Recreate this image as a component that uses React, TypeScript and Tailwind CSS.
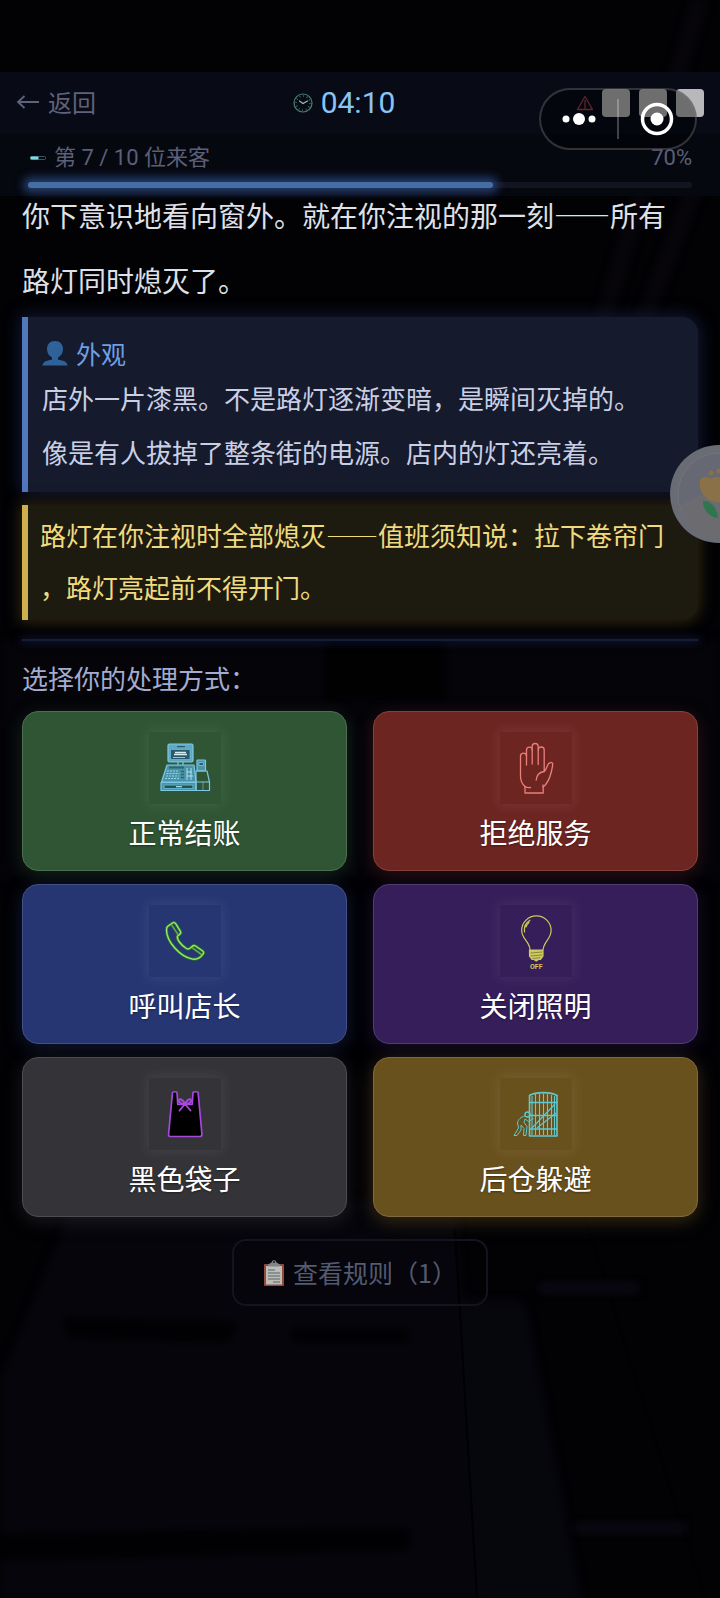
import React, { useState } from 'react';

type Action = {
  id: string;
  label: string;
  className: string;
  icon: React.ReactNode;
};

const RegisterIcon = () => (
  <svg viewBox="0 0 72 72" className="h-full w-full" fill="none" stroke="#7cc8e6" strokeWidth="1.2" strokeLinejoin="round" aria-hidden="true">
    <rect x="19" y="12" width="25" height="18" rx="1.5" fill="#5fa9c4" />
    <rect x="21.5" y="17.5" width="19.5" height="10" fill="#2b5a6a" strokeWidth="0.6" />
    <path d="M28 14.6h8" stroke="#2b5a6a" />
    <path d="M26 20.5h11M25 22.5h13" stroke="#d5edf5" strokeWidth="1.6" />
    <path d="M24 25.5h12M29 30v3M34 30v3" />
    <path d="M18 33h27l2 17H12.500z" fill="#4b93a6" />
    <path d="M20 35.500h15" stroke="#2d6470" strokeWidth="2" />
    <path d="M18 39h12M17.500 41.500h13M17 44h13M16 46.500h14" stroke="#8fd6ee" strokeDasharray="2 1" />
    <path d="M32 39.500h3M32 42.500h3M32 45.500h3" stroke="#2d6470" strokeWidth="1.4" />
    <path d="M38 36v12M42 36v12M38 40h5M38 44h6" stroke="#a8e2f4" strokeWidth="1" />
    <rect x="12" y="50.500" width="35" height="8" fill="#4b93a6" />
    <path d="M15 53h29v3.500H15z" stroke="#5fb0c8" fill="#2a5348" />
    <path d="M27 54.700h6" stroke="#a8e2f4" />
    <rect x="48" y="28" width="8.500" height="11" rx="0.8" fill="#4d93a8" />
    <path d="M50 30.500h4.500v3H50z" fill="#2b5a80" strokeWidth="0.8" />
    <path d="M47 39h11l2.500 11v8.500H47zM47 50h13.500" />
    <path d="M54 50v8" strokeWidth="0.6" />
  </svg>
);

const HandIcon = () => (
  <svg viewBox="0 0 72 72" className="h-full w-full" fill="none" stroke="#e8807a" strokeWidth="1.300" strokeLinecap="round" strokeLinejoin="round" aria-hidden="true">
    <path d="M25 61v-6.500c-3-2.500-4.500-6-4.500-10.500V23.500a3.100 3.100 0 0 1 6 0V18a2.800 2.800 0 0 1 5.700 0v-3.500a2.900 2.900 0 0 1 6 0V18a2.900 2.900 0 0 1 6 0v21.500c1.800-1.500 2.600-4 3.500-6.500 1-2.700 5-3.600 5-.8 0 1.600-.6 4.300-1.300 7.300-1.500 6.500-3.500 11.500-8.200 15.500v6z" />
    <path d="M26.500 23v10M32.200 18v14M38.200 18v14.500M44 39.500c-4.500.8-7.500 4-7.800 8.500M25 54.500c1.500 1.200 3.500 1.200 5.500 1M43 55v-2" />
  </svg>
);

const PhoneIcon = () => (
  <svg viewBox="0 0 72 72" className="h-full w-full" fill="none" strokeLinecap="round" strokeLinejoin="round" aria-hidden="true">
    <path
      d="M18.500 21.500l5-3.500c1.200-.8 2.500-.5 3.200.7l4.700 7.600c.6 1 .4 2.100-.5 2.800l-2.500 2.100c-.7 3 3.500 9 9 12.300 1.800 1 2.700.5 4-.5l2.200-1.900c.8-.7 1.900-.8 2.900-.1l7.200 5c1.200.8 1.200 2 .3 3.200-2.500 3.600-6 5.600-10.500 4.900C31 51.800 17.500 36.500 17.500 25c0-1.500.2-2.700 1-3.500z"
      stroke="#2b7a1c" strokeWidth="3"
    />
    <path
      d="M18.500 21.500l5-3.500c1.200-.8 2.500-.5 3.200.7l4.700 7.600c.6 1 .4 2.100-.5 2.800l-2.500 2.100c-.7 3 3.500 9 9 12.300 1.800 1 2.700.5 4-.5l2.200-1.900c.8-.7 1.900-.8 2.900-.1l7.200 5c1.200.8 1.200 2 .3 3.200-2.500 3.600-6 5.600-10.500 4.900C31 51.800 17.500 36.500 17.500 25c0-1.500.2-2.700 1-3.500z"
      stroke="#98e678" strokeWidth="1.400"
    />
    <path d="M23 20.500l6 9M43.500 43l9 6.500" stroke="#5fae35" strokeWidth="1.600" />
  </svg>
);

const BulbIcon = () => (
  <svg viewBox="0 0 72 72" className="h-full w-full" fill="none" stroke="#cdc95a" strokeWidth="1.200" strokeLinecap="round" aria-hidden="true">
    <path d="M30 44.500c-.5-8-8.300-10.500-8.300-19a14.700 14.700 0 0 1 29.400 0c0 8.500-7.300 11-8 19" />
    <path d="M24.500 27c-.8-5 1.500-9.500 5.500-11.800M26 22c.6-2 1.600-3.500 3-4.500" />
    <path d="M29.500 45h13.500v6l-2.500 3.500h-2L36.200 56 34 54.500h-2L29.500 51z" fill="#cdc95a" />
    <path d="M31 48l11-1M31 51l11-1M33 53.500l7-.8" stroke="#6d6540" strokeWidth="0.7" />
    <text x="36.300" y="64" textAnchor="middle" fontSize="7" fontWeight="700" fontFamily="Roboto, sans-serif" fill="#cdc95a" stroke="none">OFF</text>
  </svg>
);

const BagIcon = () => (
  <svg viewBox="0 0 72 72" className="h-full w-full" fill="none" stroke="#a648dc" strokeLinejoin="round" strokeLinecap="round" aria-hidden="true">
    <path d="M23.500 14.500c.1-1 4.400-1 4.500 0l.8 12h14.400l.8-12c.1-1 5-1 5.100 0l3.800 41.500c.1 1.700-.6 2.500-2 2.500H21.500c-1.500 0-2-.8-1.900-2.500z" fill="#000" strokeWidth="1.700" />
    <path d="M36 25.500c-3-5-6.500-5.500-6-2.500.3 2 3.500 3.200 6 2.500zM36 25.500c3-5 6.500-5.500 6-2.500-.3 2-3.500 3.200-6 2.500zM36 26l-5.500 6.500M36 26l5.500 6.500" strokeWidth="1.900" />
  </svg>
);

const GateIcon = () => (
  <svg viewBox="0 0 72 72" className="h-full w-full" fill="none" stroke="#5fc9cf" strokeWidth="1.300" strokeLinejoin="round" aria-hidden="true">
    <path d="M29.500 58V17.500c6-3.800 21.500-3.800 27.500 0V58z" strokeWidth="1.600" />
    <path d="M32 18v39M35.500 16v41M39.500 16v41M43.500 15.500V57M47.500 16v41M51.500 17v40M54.500 18v39" strokeWidth="1.100" />
    <path d="M30 24.500h27M30 37.500h27M30 51h27" strokeWidth="1.700" />
    <path d="M32 50l23-24M37 50l19-15" strokeWidth="1.100" />
    <circle cx="27.500" cy="36.500" r="2.500" />
    <path d="M25 38c-4 .8-7 3.500-7.500 7l1 5-4.500 7.500h3l4-5.500v-5l3 3.500-.5 7h2.500l1-9-3-4 1-3.500 3.500 2.500 5-3" strokeWidth="1" />
  </svg>
);

const ClockIcon = () => (
  <svg viewBox="0 0 20 20" className="h-5 w-5" fill="none" stroke="#47806f" aria-hidden="true">
    <circle cx="10" cy="10" r="9" strokeWidth="1.200" />
    <circle cx="10" cy="10" r="7" strokeWidth="1.600" strokeDasharray="0.8 2.865" />
    <path d="M6.500 8l3.500 2.500L14.500 8" stroke="#8fc7b4" strokeWidth="1.100" strokeLinecap="round" />
  </svg>
);

const BatteryIcon = () => (
  <svg viewBox="0 0 16 4" className="h-1 w-4" aria-hidden="true">
    <rect x="0.500" y="0.500" width="15" height="3" rx="1" fill="none" stroke="#3f6f78" strokeWidth="0.800" />
    <rect x="0.500" y="0.500" width="8" height="3" rx="0.800" fill="#7fdbe0" />
  </svg>
);

const WarningIcon = () => (
  <svg viewBox="0 0 18 16" className="h-4 w-[18px]" fill="none" stroke="#9a4048" strokeWidth="1.300" strokeLinejoin="round" aria-hidden="true">
    <path d="M9 1.500L16.500 14.500H1.500zM9 5v9" />
  </svg>
);

const PersonIcon = () => (
  <svg viewBox="0 0 26 26" className="h-[26px] w-[26px]" fill="#2f6299" aria-hidden="true">
    <path d="M13 1c-5 0-8 3.500-8 8 0 4 2 7 5 8.500v2.300C4 20.500.8 22 .5 25.500h25c-.3-3.500-3.500-5-9.500-5.700v-2.300c3-1.500 5-4.500 5-8.500 0-4.500-3-8-8-8z" />
  </svg>
);

const ClipboardIcon = () => (
  <svg viewBox="0 0 22 28" className="h-7 w-[22px]" aria-hidden="true">
    <rect x="1" y="5" width="20" height="22" rx="1" fill="#94493f" />
    <path d="M3 7h16v18.500H3z" fill="#bdbdb8" />
    <path d="M5.500 7.500L5 5.500c1.500-1.500 3.500-1 4-3C9.500.8 12.500.8 13 2.500c.5 2 2.500 1.500 4 3l-.5 2z" fill="#7f868b" />
    <circle cx="11" cy="3" r="1" fill="#16161e" />
    <path d="M5 11h7M5 14h12M5 17h12M5 20h12M10 23h7" stroke="#59636b" strokeWidth="1.200" />
  </svg>
);

// dim desk scene behind everything
const Backdrop = () => (
  <svg viewBox="0 0 720 1598" preserveAspectRatio="none" className="absolute inset-0 h-full w-full" aria-hidden="true">
    <defs>
      <filter id="soft" x="-5%" y="-5%" width="110%" height="110%" colorInterpolationFilters="sRGB">
        <feGaussianBlur stdDeviation="4" />
      </filter>
    </defs>
    <rect width="720" height="1598" fill="#020205" />
    <g filter="url(#soft)">
      <path d="M700 0L600 330M720 120L640 330" stroke="#08060b" strokeWidth="14" />
      <path d="M0 640h720v240H0z" fill="#040409" />
      <path d="M325 640h120v60H325z" fill="#010102" />
      <path d="M0 1380L75 1200h380l35 398H0z" fill="#05050b" />
      <path d="M455 1300h60q10 0 12 12l55 290H478z" fill="#06060d" />
      <path d="M62 1318l175 4-8 20-160-4zM292 1328h116v14H292z" fill="#010103" />
      <path d="M0 1534l410-6v22L0 1560z" fill="#010103" />
    </g>
    <path d="M585 1218l120 380M455 1230l22 368" stroke="#010103" strokeWidth="2" />
    <g filter="url(#soft)">
      <path d="M540 1284h98v8h-98zM575 1524h110v8H575z" fill="#0c0b16" />
    </g>
  </svg>
);

const actions: Action[] = [
  { id: 'checkout', label: '正常结账', className: 'bg-[#2f5534] border-[#4d6e51] shadow-[0_4px_18px_rgba(47,85,52,0.4)]', icon: <RegisterIcon /> },
  { id: 'refuse', label: '拒绝服务', className: 'bg-[#6d2522] border-[#84413e] shadow-[0_4px_18px_rgba(109,37,34,0.4)]', icon: <HandIcon /> },
  { id: 'call', label: '呼叫店长', className: 'bg-[#263673] border-[#444f83] shadow-[0_4px_18px_rgba(38,54,115,0.4)]', icon: <PhoneIcon /> },
  { id: 'lights', label: '关闭照明', className: 'bg-[#351e5a] border-[#523d72] shadow-[0_4px_18px_rgba(53,30,90,0.4)]', icon: <BulbIcon /> },
  { id: 'bag', label: '黑色袋子', className: 'bg-[#343337] border-[#4d4c50] shadow-[0_4px_18px_rgba(52,51,55,0.5)]', icon: <BagIcon /> },
  { id: 'hide', label: '后仓躲避', className: 'bg-[#69511e] border-[#80693a] shadow-[0_4px_18px_rgba(105,81,30,0.5)]', icon: <GateIcon /> },
];

const ActionButton: React.FC<{ action: Action; onSelect: (id: string) => void }> = ({ action, onSelect }) => (
  <button
    onClick={() => onSelect(action.id)}
    className={`flex h-40 flex-col items-center rounded-2xl border pt-5 ${action.className}`}
  >
    <span className="h-[72px] w-[72px] shadow-[0_0_12px_2px_rgba(255,255,255,0.08)]">{action.icon}</span>
    <span className="mt-2 text-[28px] leading-10 text-white [text-shadow:0_1px_2px_rgba(0,0,0,0.4)]">{action.label}</span>
  </button>
);

const App: React.FC = () => {
  const [visitor] = useState(7);
  const [, setChoice] = useState<string | null>(null);
  const total = 10;
  const percent = Math.round((visitor / total) * 100);

  return (
    <div lang="zh-CN" className="relative min-h-screen overflow-hidden bg-[#020205] font-['Noto_Sans_CJK_SC',sans-serif]">
      <Backdrop />

      <div className="relative">
        <header className="relative z-10 pt-[72px]">
          <div className="relative flex h-[62px] items-center justify-between bg-[#080b16] px-4">
            <button className="flex items-center gap-2 pb-0.5 pr-4 text-2xl text-[#5f627a]">
              <svg viewBox="0 0 24 16" className="h-4 w-6" fill="none" stroke="currentColor" strokeWidth="1.800" aria-hidden="true">
                <path d="M23 8H2M8.500 2L2 8l6.500 6" />
              </svg>
              返回
            </button>
            <div className="flex items-center gap-2">
              <ClockIcon />
              <span className="font-[Roboto,sans-serif] text-[30px] leading-10 text-[#88c4f5]">04:10</span>
            </div>
            <div className="flex items-center gap-2">
              <WarningIcon />
              <div className="flex gap-[9px]">
                <span className="h-7 w-7 rounded-sm bg-[#b8b8ba]" />
                <span className="h-7 w-7 rounded-sm bg-[#b8b8ba]" />
                <span className="h-7 w-7 rounded-sm bg-[#b8b8ba]" />
              </div>
            </div>
            {/* host app capsule floats over the header */}
            <div className="absolute right-[23px] top-4 flex h-[62px] w-[158px] items-center rounded-full border-2 border-[#77777a]/40 bg-black/40">
              <button aria-label="更多" className="flex flex-1 justify-center">
                <svg viewBox="0 0 34 12" className="h-3 w-[34px]" fill="#fff" aria-hidden="true">
                  <circle cx="4" cy="6" r="3.500" />
                  <circle cx="17" cy="6" r="6" />
                  <circle cx="30" cy="6" r="3.500" />
                </svg>
              </button>
              <span className="h-10 w-[2px] bg-white/25" />
              <button aria-label="关闭" className="flex flex-1 justify-center">
                <svg viewBox="0 0 34 34" className="h-[34px] w-[34px]" aria-hidden="true">
                  <circle cx="17" cy="17" r="14.500" fill="none" stroke="#fff" strokeWidth="3.500" />
                  <circle cx="17" cy="17" r="6.500" fill="#fff" />
                </svg>
              </button>
            </div>
          </div>
          <div className="bg-[#060810] px-7 pb-2 pt-2">
            <div className="flex items-center justify-between font-[Roboto,'Noto_Sans_CJK_SC',sans-serif] text-[22px] leading-8 text-[#5c5f78]">
              <span className="flex items-center gap-2 pl-0.5">
                <BatteryIcon />
                第 {visitor} / {total} 位来客
              </span>
              <span>{percent}%</span>
            </div>
            <div className="mt-2 h-1.5 rounded-full bg-[#121520]">
              <div
                className="h-full rounded-full bg-[#456fa3] shadow-[0_0_8px_5px_rgba(42,72,128,0.8)]"
                style={{ width: `${percent}%` }}
              />
            </div>
          </div>
        </header>

        <main className="px-[22px]">
          {/* story is scrolled slightly under the progress bar */}
          <p className="-mt-[13px] text-[28px] leading-[65px] text-[#dfe0e8]">
            你下意识地看向窗外。就在你注视的那一刻——所有
            <br />
            路灯同时熄灭了。
          </p>

          <section className="mt-1 rounded-r-2xl border-l-6 border-[#5079bd] bg-[#161a2d] pb-[13px] pl-[14px] pt-[18px] shadow-[0_0_16px_2px_rgba(28,40,84,0.6)]">
            <h2 className="flex items-center gap-2 text-[25px] leading-9 text-[#6d9fe6]">
              <PersonIcon />
              外观
            </h2>
            <p className="text-[26px] leading-[54px] text-[#c9cfe4]">
              店外一片漆黑。不是路灯逐渐变暗，是瞬间灭掉的。
              <br />
              像是有人拔掉了整条街的电源。店内的灯还亮着。
            </p>
          </section>

          <p className="mt-[13px] rounded-r-2xl border-l-6 border-[#cfb04c] bg-[#1d1a10] pb-[7px] pl-3 pt-1 text-[26px] leading-[52px] text-[#f0db7e] shadow-[0_0_14px_3px_rgba(84,68,24,0.5)]">
            路灯在你注视时全部熄灭——值班须知说：拉下卷帘门
            <br />
            ，路灯亮起前不得开门。
          </p>

          <hr className="mt-[19px] h-0.5 border-0 bg-[#161d38] shadow-[0_0_8px_2px_rgba(30,42,90,0.5)]" />

          <h3 className="mt-[17px] text-[26px] leading-10 text-[#a3acd0]">选择你的处理方式：</h3>
          <div className="mt-[13px] grid grid-cols-2 gap-x-[26px] gap-y-[13px]">
            {actions.map(a => (
              <ActionButton key={a.id} action={a} onSelect={setChoice} />
            ))}
          </div>

          <div className="mt-[22px] flex justify-center">
            <button className="flex h-[67px] items-center gap-2 rounded-[14px] border-2 border-[#14141f] px-[29px] text-[25px] text-[#545a70]">
              <ClipboardIcon />
              查看规则（1）
            </button>
          </div>
        </main>
      </div>

      <button aria-label="助手" className="absolute -right-12 top-[445px] z-20 h-[98px] w-[98px]">
        <svg viewBox="0 0 98 98" className="h-full w-full" aria-hidden="true">
          <circle cx="49" cy="49" r="49" fill="#696b75" />
          <circle cx="49" cy="49" r="41" fill="#666874" stroke="#72747e" />
          <path d="M10 60l20-10 68 12c-4 20-24 32-50 32C30 94 16 80 10 60z" fill="#6b6b70" />
          <path d="M30 35c3-4 8-4 11-1 3-3 8-3 11 0v23c-12 1-24-6-22-22z" fill="#8a7148" />
          <circle cx="41" cy="28" r="2.500" fill="#8a7148" />
          <circle cx="49" cy="26" r="2.500" fill="#8a7148" />
          <path d="M33 56c7-1 14 6 15 17-9-1-15-8-15-17z" fill="#2f7550" />
        </svg>
      </button>
    </div>
  );
};

export default App;
